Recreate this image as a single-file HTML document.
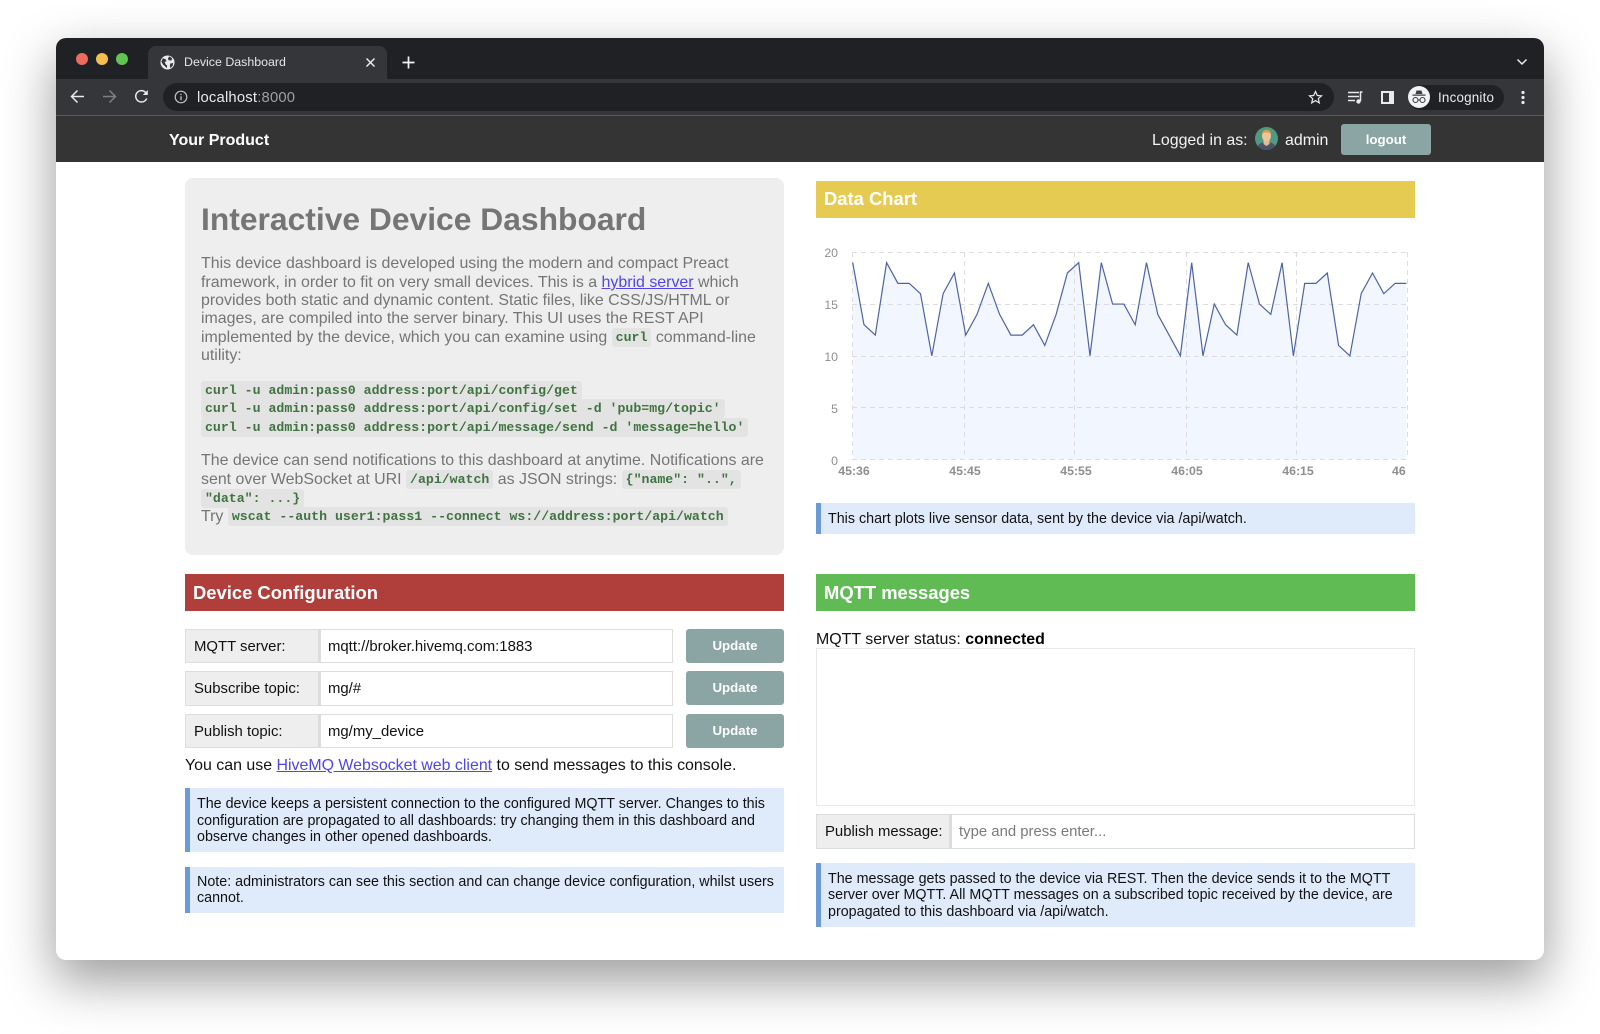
<!DOCTYPE html>
<html><head><meta charset="utf-8"><title>Device Dashboard</title>
<style>
html,body{margin:0;padding:0;background:#fff;width:1600px;height:1034px;overflow:hidden;font-family:"Liberation Sans",Arial,sans-serif}
#win{position:absolute;left:56px;top:38px;width:1488px;height:922px;border-radius:10px;box-shadow:0 20px 50px 2px rgba(0,0,0,.38);background:#fff;overflow:hidden}
.a{position:absolute}
.t{position:absolute;white-space:nowrap;height:20px;line-height:20px}
.h{font-size:15.93px;color:#757575}
.h a,.l a{color:#4f46e5;text-decoration:underline}
.c{font-family:"Liberation Mono",monospace;font-weight:bold;font-size:13.23px;color:#3f7340;background:#e3e3e3;border-radius:3px;padding:2px 4px;position:relative;top:-1px}
.i{font-size:14.3px;color:#111}
.l{font-size:15.93px;color:#111}
.bar{position:absolute;height:37px;color:#fff;font-weight:bold;font-size:18.4px;line-height:37px;padding-left:8px;box-sizing:border-box}
.info{position:absolute;background:#dfeafa;border-left:5px solid #6a9ad8;box-sizing:border-box}
.lab{position:absolute;background:#eee;border:1px solid #ddd;box-sizing:border-box;font-size:14.9px;color:#111;padding-left:8px;line-height:34px}
.inp{position:absolute;background:#fff;border:1px solid #ddd;border-left:2px solid #ddd;box-sizing:border-box;font-size:14.9px;color:#111;padding-left:7px;line-height:34px}
.btn{position:absolute;left:686px;width:98px;height:34px;background:#8aa5a3;border-radius:3px;color:#fff;font-size:13.3px;font-weight:bold;text-align:center;line-height:34px}
svg text{font-family:"Liberation Sans",sans-serif;font-size:12.3px;fill:#8f8f8f;font-weight:bold}
</style></head><body>
<div id="win"></div>

<!-- browser chrome -->
<div class="a" style="left:56px;top:38px;width:1488px;height:42px;background:#202124;border-radius:10px 10px 0 0"></div>
<div class="a" style="left:56px;top:79px;width:1488px;height:37px;background:#35363a"></div>
<div class="a" style="left:56px;top:115px;width:1488px;height:1px;background:#5b5b5b"></div>
<div class="a" style="left:56px;top:116px;width:1488px;height:46px;background:#343434"></div>

<div class="a" style="left:76px;top:53px;width:12px;height:12px;border-radius:50%;background:#ec6a5e"></div>
<div class="a" style="left:96px;top:53px;width:12px;height:12px;border-radius:50%;background:#f4bf4f"></div>
<div class="a" style="left:116px;top:53px;width:12px;height:12px;border-radius:50%;background:#61c554"></div>

<div class="a" style="left:148px;top:46px;width:239px;height:34px;background:#35363a;border-radius:8px 8px 0 0"></div>
<svg class="a" style="left:160px;top:55px" width="15" height="15" viewBox="0 0 16 16"><circle cx="8" cy="8" r="7.5" fill="#e8eaed"/><path d="M3 3.5l3 1 1 2-2 1 1 2.500 1.500 1v3L3 10 1.500 7zM10 1.500l3 2-1 2.500-3-.5-.5-2zM11 9l3-.5-.5 3-2.500 2.500-.5-3z" fill="#35363a"/></svg>
<div class="t" style="left:184px;top:52px;font-size:12.4px;color:#e3e5e8">Device Dashboard</div>
<svg class="a" style="left:365px;top:57px" width="11" height="11" viewBox="0 0 11 11"><path d="M1.500 1.500l8 8M9.500 1.500l-8 8" stroke="#e8eaed" stroke-width="1.500"/></svg>
<svg class="a" style="left:402px;top:56px" width="13" height="13" viewBox="0 0 13 13"><path d="M6.500 .5v12M.5 6.500h12" stroke="#f1f3f4" stroke-width="1.700"/></svg>
<svg class="a" style="left:1516px;top:57px" width="12" height="10" viewBox="0 0 12 10"><path d="M1.500 2.500L6 7l4.500-4.500" stroke="#e8eaed" stroke-width="1.500" fill="none"/></svg>

<svg class="a" style="left:70px;top:89px" width="15" height="15" viewBox="0 0 15 15"><path d="M14 7.500H2M7.500 1.500l-6 6 6 6" stroke="#e8eaed" stroke-width="1.500" fill="none"/></svg>
<svg class="a" style="left:102px;top:89px" width="15" height="15" viewBox="0 0 15 15"><path d="M1 7.500h12M7.500 1.500l6 6-6 6" stroke="#7d7f82" stroke-width="1.500" fill="none"/></svg>
<svg class="a" style="left:134px;top:89px" width="15" height="15" viewBox="0 0 15 15"><path d="M12.700 9.500A5.700 5.700 0 1 1 11.500 3.300L13 5" stroke="#e8eaed" stroke-width="1.500" fill="none"/><path d="M13.800 1v5h-5z" fill="#e8eaed"/></svg>

<div class="a" style="left:163px;top:83px;width:1171px;height:28px;background:#202124;border-radius:14px"></div>
<svg class="a" style="left:174px;top:90px" width="14" height="14" viewBox="0 0 14 14"><circle cx="7" cy="7" r="5.800" stroke="#bdc1c6" stroke-width="1.200" fill="none"/><path d="M7 6.200v4M7 3.800v1.300" stroke="#bdc1c6" stroke-width="1.300"/></svg>
<div class="t" style="left:197px;top:88px;font-size:14.8px;color:#e8eaed;letter-spacing:.2px">localhost<span style="color:#9aa0a6">:8000</span></div>
<svg class="a" style="left:1308px;top:90px" width="15" height="15" viewBox="0 0 15 15"><path d="M7.500 1.500l1.800 4 4.200.4-3.200 2.800 1 4.200-3.800-2.300-3.800 2.300 1-4.200L1.500 5.900l4.200-.4z" stroke="#e8eaed" stroke-width="1.200" fill="none"/></svg>
<svg class="a" style="left:1347px;top:90px" width="17" height="15" viewBox="0 0 17 15"><path d="M1 2.500h11M1 6.500h11M1 10.500h7" stroke="#e8eaed" stroke-width="1.500"/><path d="M15.500 2h-2v9" stroke="#e8eaed" stroke-width="1.500" fill="none"/><circle cx="11.500" cy="11.500" r="2.200" fill="#e8eaed"/></svg>
<svg class="a" style="left:1380px;top:90px" width="15" height="15" viewBox="0 0 15 15"><rect x="1" y="1" width="13" height="13" fill="#e8eaed"/><rect x="3" y="3" width="6" height="9" fill="#35363a"/></svg>
<div class="a" style="left:1408px;top:85px;width:96px;height:25px;background:#202124;border-radius:13px"></div>
<svg class="a" style="left:1408px;top:86px" width="22" height="22" viewBox="0 0 22 22"><circle cx="11" cy="11" r="11" fill="#f1f3f4"/><path d="M7.500 8l1-3.500h5l1 3.500zM4.500 8.500h13v1.200h-13z" fill="#3c4043"/><circle cx="7.500" cy="14" r="2.500" stroke="#3c4043" stroke-width="1.100" fill="none"/><circle cx="14.500" cy="14" r="2.500" stroke="#3c4043" stroke-width="1.100" fill="none"/><path d="M10 14h2" stroke="#3c4043"/></svg>
<div class="t" style="left:1438px;top:88px;font-size:13.4px;color:#e8eaed;letter-spacing:.2px">Incognito</div>
<svg class="a" style="left:1520px;top:90px" width="6" height="15" viewBox="0 0 6 15"><circle cx="3" cy="2.500" r="1.600" fill="#e8eaed"/><circle cx="3" cy="7.500" r="1.600" fill="#e8eaed"/><circle cx="3" cy="12.500" r="1.600" fill="#e8eaed"/></svg>

<!-- nav -->
<div class="t" style="left:169px;top:131px;font-size:16px;font-weight:bold;color:#fff">Your Product</div>
<div class="t" style="left:1152px;top:131px;font-size:15.93px;color:#f2f2f2">Logged in as:</div>
<svg class="a" style="left:1255px;top:127px" width="23" height="23" viewBox="0 0 23 23"><defs><clipPath id="av"><circle cx="11.500" cy="11.500" r="11.500"/></clipPath></defs><g clip-path="url(#av)"><rect width="23" height="23" fill="#4e9a83"/><path d="M2 23c0-6 4-8 9.500-8S21 17 21 23z" fill="#4a5468"/><path d="M8.500 12h6v5l-3 2-3-2z" fill="#e8b98c"/><ellipse cx="11.500" cy="9" rx="4.500" ry="5.500" fill="#f0c39a"/><path d="M7 8c0-4 2-5 4.500-5S16 4 16 8c-1-2-2-2.500-4.500-2.500S8 6 7 8z" fill="#d8a24a"/></g></svg>
<div class="t" style="left:1285px;top:131px;font-size:15.93px;color:#f2f2f2">admin</div>
<div class="a" style="left:1341px;top:124px;width:90px;height:31px;background:#8aa5a3;border-radius:3px;color:#fff;font-size:13.300px;font-weight:bold;text-align:center;line-height:31px">logout</div>

<!-- hero -->
<div class="a" style="left:185px;top:178px;width:599px;height:377px;background:#eee;border-radius:8px"></div>
<div class="t" style="left:201px;top:199px;height:40px;line-height:40px;font-size:31.8px;font-weight:bold;color:#757575">Interactive Device Dashboard</div>
<div class="t h" style="left:201px;top:254px">This device dashboard is developed using the modern and compact Preact</div>
<div class="t h" style="left:201px;top:273px">framework, in order to fit on very small devices. This is a <a>hybrid server</a> which</div>
<div class="t h" style="left:201px;top:291px">provides both static and dynamic content. Static files, like CSS/JS/HTML or</div>
<div class="t h" style="left:201px;top:309px">images, are compiled into the server binary. This UI uses the REST API</div>
<div class="t h" style="left:201px;top:328px">implemented by the device, which you can examine using <span class="c">curl</span> command-line</div>
<div class="t h" style="left:201px;top:346px">utility:</div>
<div class="t h" style="left:201px;top:381px"><span class="c">curl -u admin:pass0 address:port/api/config/get</span></div>
<div class="t h" style="left:201px;top:399px"><span class="c">curl -u admin:pass0 address:port/api/config/set -d 'pub=mg/topic'</span></div>
<div class="t h" style="left:201px;top:418px"><span class="c">curl -u admin:pass0 address:port/api/message/send -d 'message=hello'</span></div>
<div class="t h" style="left:201px;top:451px">The device can send notifications to this dashboard at anytime. Notifications are</div>
<div class="t h" style="left:201px;top:470px">sent over WebSocket at URI <span class="c">/api/watch</span> as JSON strings: <span class="c">{"name": "..",</span></div>
<div class="t h" style="left:201px;top:489px"><span class="c">"data": ...}</span></div>
<div class="t h" style="left:201px;top:507px">Try <span class="c">wscat --auth user1:pass1 --connect ws://address:port/api/watch</span></div>

<!-- device config -->
<div class="bar" style="left:185px;top:574px;width:599px;background:#b03e3a">Device Configuration</div>
<div class="lab" style="left:185px;top:629px;width:134px;height:34px">MQTT server:</div>
<div class="inp" style="left:319px;top:629px;width:354px;height:34px">mqtt://broker.hivemq.com:1883</div>
<div class="btn" style="top:629px">Update</div>
<div class="lab" style="left:185px;top:671px;width:134px;height:35px">Subscribe topic:</div>
<div class="inp" style="left:319px;top:671px;width:354px;height:35px">mg/#</div>
<div class="btn" style="top:671px">Update</div>
<div class="lab" style="left:185px;top:714px;width:134px;height:34px">Publish topic:</div>
<div class="inp" style="left:319px;top:714px;width:354px;height:34px">mg/my_device</div>
<div class="btn" style="top:714px">Update</div>
<div class="t l" style="left:185px;top:756px">You can use <a>HiveMQ Websocket web client</a> to send messages to this console.</div>

<div class="info" style="left:185px;top:788px;width:599px;height:64px"></div>
<div class="t i" style="left:197px;top:794px">The device keeps a persistent connection to the configured MQTT server. Changes to this</div>
<div class="t i" style="left:197px;top:811px">configuration are propagated to all dashboards: try changing them in this dashboard and</div>
<div class="t i" style="left:197px;top:827px">observe changes in other opened dashboards.</div>
<div class="info" style="left:185px;top:867px;width:599px;height:46px"></div>
<div class="t i" style="left:197px;top:872px">Note: administrators can see this section and can change device configuration, whilst users</div>
<div class="t i" style="left:197px;top:888px">cannot.</div>

<!-- chart -->
<div class="bar" style="left:816px;top:181px;width:599px;line-height:36px;background:#e6cb52">Data Chart</div>
<svg class="a" style="left:0;top:0" width="1600" height="1034">
<g transform="translate(852.7,459.3) scale(11.3,-10.35)">
<polygon fill="#f2f6fe" points="0,0 0,19 1,13 2,12 3,19 4,17 5,17 6,16 7,10 8,16 9,18 10,12 11,14 12,17 13,14 14,12 15,12 16,13 17,11 18,14 19,18 20,19 21,10 22,19 23,15 24,15 25,13 26,19 27,14 28,12 29,10 30,19 31,10 32,15 33,13 34,12 35,19 36,15 37,14 38,19 39,10 40,17 41,17 42,18 43,11 44,10 45,16 46,18 47,16 48,17 49,17 49,0"/>
</g>
<g stroke="#dcdce2" stroke-width="1" stroke-dasharray="5 4" fill="none">
<path d="M852 252.500H1408M852 304.500H1408M852 356.500H1408M852 407.500H1408M852 459.500H1408"/>
<path d="M852.500 252V459M964.500 252V459M1074.500 252V459M1186.500 252V459M1296.500 252V459M1407.500 252V459"/>
</g>
<g transform="translate(852.7,459.3) scale(11.3,-10.35)">
<polyline fill="none" stroke="#4c63a6" stroke-width="1.200" vector-effect="non-scaling-stroke" points="0,19 1,13 2,12 3,19 4,17 5,17 6,16 7,10 8,16 9,18 10,12 11,14 12,17 13,14 14,12 15,12 16,13 17,11 18,14 19,18 20,19 21,10 22,19 23,15 24,15 25,13 26,19 27,14 28,12 29,10 30,19 31,10 32,15 33,13 34,12 35,19 36,15 37,14 38,19 39,10 40,17 41,17 42,18 43,11 44,10 45,16 46,18 47,16 48,17 49,17"/>
</g>
<text x="838" y="257" text-anchor="end" style="font-weight:normal">20</text>
<text x="838" y="309" text-anchor="end" style="font-weight:normal">15</text>
<text x="838" y="361" text-anchor="end" style="font-weight:normal">10</text>
<text x="838" y="413" text-anchor="end" style="font-weight:normal">5</text>
<text x="838" y="465" text-anchor="end" style="font-weight:normal">0</text>
<text x="854" y="475" text-anchor="middle">45:36</text>
<text x="965" y="475" text-anchor="middle">45:45</text>
<text x="1076" y="475" text-anchor="middle">45:55</text>
<text x="1187" y="475" text-anchor="middle">46:05</text>
<text x="1298" y="475" text-anchor="middle">46:15</text>
<text x="1392" y="475">46</text>
</svg>
<div class="info" style="left:816px;top:503px;width:599px;height:31px"></div>
<div class="t i" style="left:828px;top:509px">This chart plots live sensor data, sent by the device via /api/watch.</div>

<!-- mqtt -->
<div class="bar" style="left:816px;top:574px;width:599px;background:#60bb55">MQTT messages</div>
<div class="t l" style="left:816px;top:630px">MQTT server status: <b style="color:#000">connected</b></div>
<div class="a" style="left:816px;top:648px;width:599px;height:158px;border:1px solid #e8e8e8;box-sizing:border-box;background:#fff"></div>
<div class="lab" style="left:816px;top:814px;width:134px;height:35px;line-height:35px">Publish message:</div>
<div class="inp" style="left:950px;top:814px;width:465px;height:35px;line-height:35px;color:#7a7a7a">type and press enter...</div>
<div class="info" style="left:816px;top:863px;width:599px;height:64px"></div>
<div class="t i" style="left:828px;top:869px">The message gets passed to the device via REST. Then the device sends it to the MQTT</div>
<div class="t i" style="left:828px;top:885px">server over MQTT. All MQTT messages on a subscribed topic received by the device, are</div>
<div class="t i" style="left:828px;top:902px">propagated to this dashboard via /api/watch.</div>
</body></html>
